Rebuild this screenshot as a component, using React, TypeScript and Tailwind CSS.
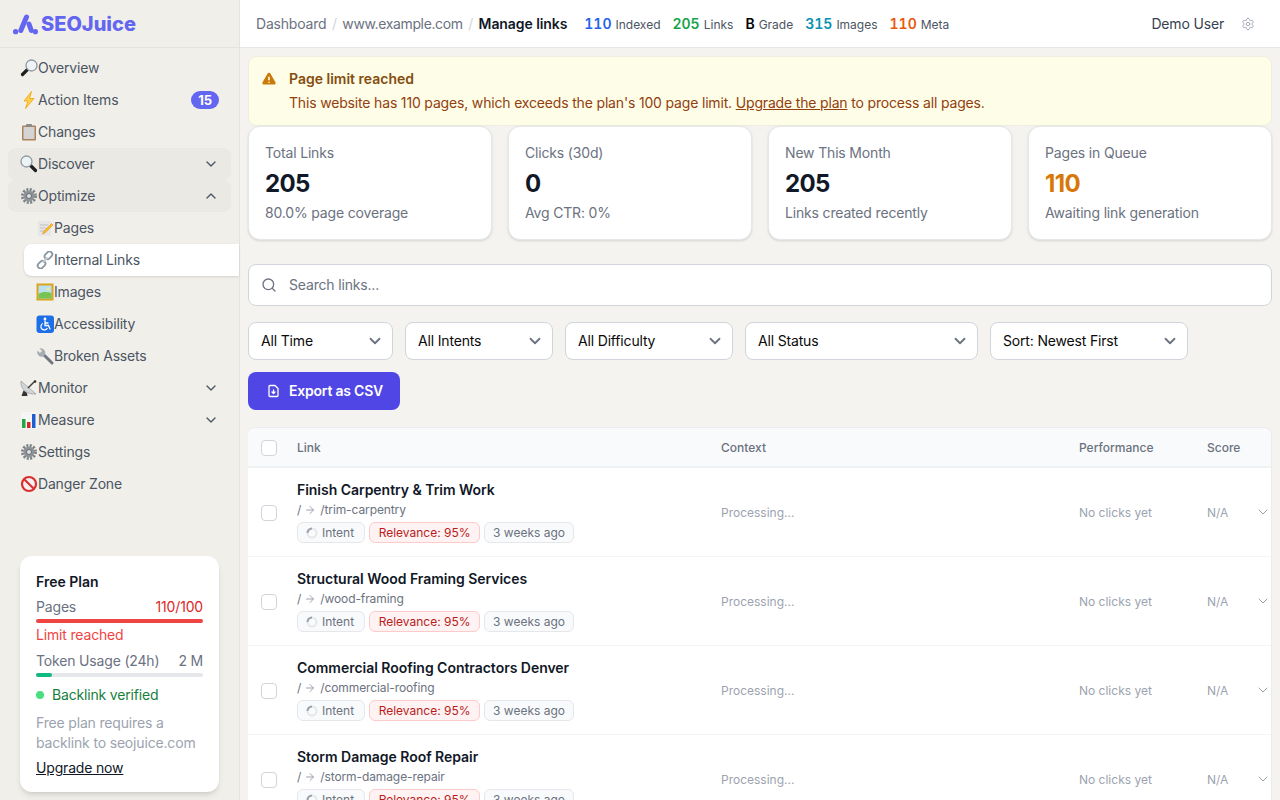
import { ArrowRight, ChevronDown, ChevronUp, Search, Settings } from "lucide-react"
import type { ReactNode } from "react"

const font = { fontFamily: "Inter, 'Noto Sans', sans-serif" }

// the original uses colour emoji, there is no such font here so they are drawn
function Emoji({ name }: { name: string }) {
  const icons: Record<string, ReactNode> = {
    mag_right: (
      <>
        <path d="M7.500 10.500 2.500 15.500" stroke="#1f1f1f" strokeWidth="3.200" strokeLinecap="round" />
        <circle cx="11.500" cy="6.500" r="5.500" fill="#eef3f6" stroke="#8d99a3" strokeWidth="1.300" />
      </>
    ),
    zap: <path d="M11.500 .5 4 10h4l-2.500 7.500L14 7.500H9.500z" fill="#fcd34d" stroke="#f59e0b" strokeWidth=".8" />,
    clipboard: (
      <>
        <rect x="2" y="2.500" width="14" height="15" rx="1" fill="#a9845c" />
        <rect x="3.500" y="4" width="11" height="12" fill="#d4d4d4" />
        <rect x="6" y="1" width="6" height="2.500" rx=".5" fill="#8c8c8c" />
      </>
    ),
    mag_left: (
      <>
        <path d="M10.500 10.500 15.500 15.500" stroke="#1f1f1f" strokeWidth="3.200" strokeLinecap="round" />
        <circle cx="6.500" cy="6.500" r="5.500" fill="#eef3f6" stroke="#8d99a3" strokeWidth="1.300" />
      </>
    ),
    gear: (
      <>
        <circle cx="9" cy="9" r="6.500" fill="none" stroke="#7d8287" strokeWidth="3" strokeDasharray="2 1.400" />
        <circle cx="9" cy="9" r="5.500" fill="#8e9398" />
        <circle cx="9" cy="9" r="2.500" fill="#dfe2e4" stroke="#55595d" strokeWidth=".8" />
      </>
    ),
    memo: (
      <>
        <rect x="2" y="2" width="13" height="15" fill="#e6e6e6" />
        <path d="M4 6h8M4 9h6M4 12h4" stroke="#b5b5b5" strokeWidth=".8" />
        <path d="M15.500 4.500 8 12l-1.500 3 3-1.500L17 6z" fill="#fbbf24" stroke="#d9822b" strokeWidth=".5" />
      </>
    ),
    link: (
      <>
        <rect x="8.200" y="1.600" width="8.500" height="5.600" rx="2.800" transform="rotate(-45 12.400 4.400)" fill="none" stroke="#8a96a0" strokeWidth="1.800" />
        <rect x="1.300" y="10.800" width="8.500" height="5.600" rx="2.800" transform="rotate(-45 5.600 13.600)" fill="none" stroke="#8a96a0" strokeWidth="1.800" />
        <path d="M6.500 11.500 11.500 6.500" stroke="#c2cad0" strokeWidth="1.800" />
      </>
    ),
    picture: (
      <>
        <rect x=".5" y=".5" width="17" height="17" fill="#d9a520" />
        <rect x="2.500" y="2.500" width="13" height="13" fill="#b9e2ee" />
        <path d="M2.500 11c4-2.500 8.500-2.500 13-1v5.500h-13z" fill="#79c450" />
        <circle cx="12" cy="6" r="1.300" fill="#fde68a" />
      </>
    ),
    wheelchair: (
      <>
        <rect x=".5" y=".5" width="17.500" height="17.500" rx="3" fill="#1d6fe8" />
        <circle cx="9" cy="4" r="1.400" fill="#fff" />
        <path d="M9 6v4.500h3.500l1.500 3.500M9 8h3" stroke="#fff" strokeWidth="1.300" fill="none" strokeLinecap="round" />
        <path d="M6.800 8.500a3.400 3.400 0 1 0 4.600 4.400" stroke="#fff" strokeWidth="1.200" fill="none" />
      </>
    ),
    wrench: (
      <>
        <path d="M7 7 16 16" stroke="#6f7780" strokeWidth="3" strokeLinecap="round" />
        <path d="M1.500 3.500 4 6l2-2-2.500-2.500a4.500 4.500 0 0 1 5.500 6L7 9.500a4.500 4.500 0 0 1-5.500-6z" fill="#a7adb3" />
      </>
    ),
    satellite: (
      <>
        <path d="M1 2c-1 7 5 14 15 13z" fill="#d2d5d8" stroke="#8a8f94" strokeWidth=".6" />
        <path d="M8 9 14 3" stroke="#3a3a3a" strokeWidth="1.400" />
        <circle cx="15" cy="2.500" r="1.300" fill="#222" />
        <path d="M3.500 11.500 1.500 17h6L7 14z" fill="#333" />
      </>
    ),
    chart: (
      <>
        <rect x="1" y="1" width="16" height="17" fill="#f5f5f5" />
        <rect x="2" y="8" width="3.500" height="9" fill="#22a745" />
        <rect x="7" y="11" width="3.500" height="6" fill="#dc2626" />
        <rect x="12" y="3" width="3.500" height="14" fill="#1d5fd1" />
      </>
    ),
    no_entry: (
      <>
        <circle cx="9" cy="9" r="7" fill="#f2f2f2" stroke="#dc2f2f" strokeWidth="2.200" />
        <path d="M4.200 4.200 13.800 13.800" stroke="#dc2f2f" strokeWidth="2.200" />
      </>
    ),
  }
  return (
    <svg viewBox="0 0 18 18" className="size-[18px] shrink-0">
      {icons[name]}
    </svg>
  )
}

function NavItem({
  icon,
  label,
  open,
  badge,
  shaded,
}: {
  icon: string
  label: string
  open?: boolean
  badge?: string
  shaded?: boolean
}) {
  return (
    <div
      className={`mx-2 flex h-8 items-center rounded-lg pr-3 pl-3 text-sm text-[#4b5563] ${
        shaded ? "bg-[#ebe9e4]" : ""
      }`}
    >
      <Emoji name={icon} />
      <span className="flex-1">{label}</span>
      {badge && (
        <span className="flex h-[18px] w-7 items-center justify-center rounded-full bg-[#6366f1] text-[13px] font-bold text-white">
          {badge}
        </span>
      )}
      {open === true && <ChevronUp className="size-4 text-[#4b5563]" />}
      {open === false && <ChevronDown className="size-4 text-[#4b5563]" />}
    </div>
  )
}

function SubItem({ icon, label, active }: { icon: string; label: string; active?: boolean }) {
  return (
    <div
      className={`ml-6 flex h-8 items-center pl-3 text-sm text-[#4b5563] ${
        active ? "rounded-l-lg bg-white shadow-sm" : ""
      }`}
    >
      <Emoji name={icon} />
      <span>{label}</span>
    </div>
  )
}

function Sidebar() {
  return (
    <aside className="flex h-full w-[240px] shrink-0 flex-col border-r border-[#e5e3de] bg-[#f1efe9]">
      <div className="flex h-12 shrink-0 items-center gap-[3px] border-b border-[#e5e3de] pl-[13px]">
        <svg viewBox="0 0 25 22" className="h-[22px] w-[25px]" fill="none" stroke="#6366f1" strokeWidth="5" strokeLinecap="round">
          <circle cx="2.600" cy="18.700" r="2.600" fill="#6366f1" stroke="none" />
          <path d="M7.800 17.500 13.500 4" />
          <path d="M16 11 18.300 17.500" />
          <circle cx="22.400" cy="18.700" r="2.600" fill="#6366f1" stroke="none" />
        </svg>
        <span className="text-[20px] font-extrabold tracking-normal text-[#6366f1]">SEOJuice</span>
      </div>
      <nav className="mt-1 flex-1">
        <NavItem icon="mag_right" label="Overview" />
        <NavItem icon="zap" label="Action Items" badge="15" />
        <NavItem icon="clipboard" label="Changes" />
        <NavItem icon="mag_left" label="Discover" open={false} shaded />
        <NavItem icon="gear" label="Optimize" open shaded />
        <SubItem icon="memo" label="Pages" />
        <SubItem icon="link" label="Internal Links" active />
        <SubItem icon="picture" label="Images" />
        <SubItem icon="wheelchair" label="Accessibility" />
        <SubItem icon="wrench" label="Broken Assets" />
        <NavItem icon="satellite" label="Monitor" open={false} />
        <NavItem icon="chart" label="Measure" open={false} />
        <NavItem icon="gear" label="Settings" />
        <NavItem icon="no_entry" label="Danger Zone" />
      </nav>
      <div className="mx-5 mb-2 rounded-xl bg-white px-4 pt-4 pb-[14px] text-sm shadow-md">
        <div className="font-semibold tracking-normal text-[#111827]">Free Plan</div>
        <div className="mt-[5px] flex justify-between text-[#6b7280]">
          <span>Pages</span>
          <span className="text-[#dc2626]">110/100</span>
        </div>
        <div className="mt-0.5 h-1 rounded-full bg-[#ef4444]" />
        <div className="mt-0.5 text-[#ef4444]">Limit reached</div>
        <div className="mt-1.5 flex justify-between text-[#6b7280]">
          <span>Token Usage (24h)</span>
          <span>2 M</span>
        </div>
        <div className="mt-0.5 h-1 rounded-full bg-[#e5e7eb]">
          <div className="h-1 w-4 rounded-full bg-[#10b981]" />
        </div>
        <div className="mt-2 flex items-center gap-2 text-[#15803d]">
          <span className="size-2 rounded-full bg-[#4ade80]" />
          Backlink verified
        </div>
        <div className="mt-2 text-[#9ca3af]">Free plan requires a backlink to seojuice.com</div>
        <div className="mt-[5px] text-[#111827] underline">Upgrade now</div>
      </div>
    </aside>
  )
}

function TopStat({ value, label, color }: { value: string; label: string; color: string }) {
  return (
    <span className="flex items-baseline gap-1">
      <span className={`text-sm font-semibold tracking-normal tabular-nums ${color}`}>{value}</span>
      <span className="text-xs tracking-normal text-[#4b5563]">{label}</span>
    </span>
  )
}

function TopBar() {
  return (
    <header className="flex h-12 shrink-0 items-center border-b border-[#e5e7eb] bg-white pr-[25px] pl-4">
      <div className="flex items-center text-sm text-[#6b7280]">
        <span className="tracking-[-0.2px]">Dashboard</span>
        <span className="mx-[5.5px] text-[#d1d5db]">/</span>
        <span className="tracking-[-0.36px]">www.example.com</span>
        <span className="mx-[5.5px] text-[#d1d5db]">/</span>
        <span className="font-semibold tracking-[-0.08px] text-[#111827]">Manage links</span>
      </div>
      <div className="ml-[17px] flex items-baseline gap-3">
        <TopStat value="110" label="Indexed" color="text-[#2563eb]" />
        <TopStat value="205" label="Links" color="text-[#16a34a]" />
        <TopStat value="B" label="Grade" color="text-black" />
        <TopStat value="315" label="Images" color="text-[#0891b2]" />
        <TopStat value="110" label="Meta" color="text-[#ea580c]" />
      </div>
      <span className="ml-auto text-sm text-[#374151]">Demo User</span>
      <Settings className="ml-[17px] size-[14px] text-[#9ca3af]" strokeWidth={1.5} />
    </header>
  )
}

function StatCard({
  label,
  value,
  sub,
  valueColor = "text-[#111827]",
}: {
  label: string
  value: string
  sub: string
  valueColor?: string
}) {
  return (
    <div className="rounded-xl border border-[#e5e7eb] bg-white p-4 text-sm shadow-sm">
      <div className="text-[#6b7280]">{label}</div>
      <div className={`mt-[5px] text-2xl font-bold tracking-[-0.6px] ${valueColor}`}>{value}</div>
      <div className="mt-[3px] text-[#6b7280]">{sub}</div>
    </div>
  )
}

function Select({ label, width }: { label: string; width: string }) {
  return (
    <div
      className={`flex h-[38px] items-center justify-between rounded-lg border border-[#d1d5db] bg-white pr-2 pl-3 text-sm text-[#0a0a0a] ${width}`}
    >
      {label}
      <ChevronDown className="size-[18px] text-[#6b7280]" strokeWidth={2.4} />
    </div>
  )
}

function Checkbox() {
  return <span className="block size-4 rounded border border-[#d1d5db] bg-white" />
}

const rowGrid = "grid grid-cols-[49px_424px_358px_128px_48px_17px]"

function LinkRow({ title, path }: { title: string; path: string }) {
  return (
    <div className={`${rowGrid} items-center border-b border-[#f3f4f6] bg-white pt-3 pb-[13px] text-xs tracking-normal`}>
      <span className="pt-[2px] pl-[13px]">
        <Checkbox />
      </span>
      <div>
        <div className="text-sm leading-5 font-semibold tracking-[-0.03px] text-[#111827]">{title}</div>
        <div className="mt-0.5 flex h-4 items-center tracking-[-0.1px] text-[#6b7280]">
          / <ArrowRight className="mr-1 ml-[3px] size-3 text-[#9ca3af]" /> {path}
        </div>
        <div className="mt-1 flex gap-1">
          <span className="flex h-[21px] items-center gap-1 rounded-md border border-[#e5e7eb] bg-[#f9fafb] pr-[10px] pl-2 text-[#6b7280]">
            <svg viewBox="0 0 12 12" className="size-3">
              <circle cx="6" cy="6" r="4.500" fill="none" stroke="#e5e7eb" strokeWidth="2" />
              <path d="M1.500 6A4.500 4.500 0 0 1 6 1.500" fill="none" stroke="#9ca3af" strokeWidth="2" />
            </svg>
            Intent
          </span>
          <span className="flex h-[21px] items-center rounded-md border border-[#fecaca] bg-[#fef2f2] px-[8.5px] text-[#b91c1c]">
            Relevance: 95%
          </span>
          <span className="flex h-[21px] items-center rounded-md border border-[#e5e7eb] bg-[#f9fafb] px-2 text-[#6b7280]">
            3 weeks ago
          </span>
        </div>
      </div>
      <span className="pt-[2px] text-[#9ca3af]">Processing...</span>
      <span className="pt-[2px] text-[#9ca3af]">No clicks yet</span>
      <span className="pt-[2px] text-[#9ca3af]">N/A</span>
      <ChevronDown className="size-4 text-[#9ca3af]" strokeWidth={1.5} />
    </div>
  )
}

export default function App() {
  return (
    <div className="flex h-screen w-full overflow-hidden bg-[#f4f3ef] tracking-[-0.17px]" style={font}>
      <Sidebar />
      <div className="flex h-full min-w-0 flex-1 flex-col">
        <TopBar />
        <main className="flex-1 overflow-hidden px-2 pt-2">
          <div className="flex gap-3 rounded-lg border border-[#eeeee0] bg-[#fefde8] p-3 text-sm">
            <svg viewBox="0 0 20 20" className="mt-0.5 size-4 shrink-0 fill-[#ca7a08]">
              <path
                fillRule="evenodd"
                d="M8.260 3.100c.770-1.330 2.700-1.330 3.470 0l6.290 10.900c.770 1.330-.190 3-1.730 3H3.700c-1.540 0-2.500-1.670-1.730-3L8.260 3.100zM10 7a1 1 0 0 0-1 1v3a1 1 0 1 0 2 0V8a1 1 0 0 0-1-1zm0 8a1 1 0 1 0 0-2 1 1 0 0 0 0 2z"
              />
            </svg>
            <div>
              <div className="font-semibold tracking-normal text-[#854d0e]">Page limit reached</div>
              <div className="mt-1 text-[#92400e]">
                This website has 110 pages, which exceeds the plan's 100 page limit.{" "}
                <span className="underline">Upgrade the plan</span> to process all pages.
              </div>
            </div>
          </div>

          <div className="grid grid-cols-4 gap-4">
            <StatCard label="Total Links" value="205" sub="80.0% page coverage" />
            <StatCard label="Clicks (30d)" value="0" sub="Avg CTR: 0%" />
            <StatCard label="New This Month" value="205" sub="Links created recently" />
            <StatCard label="Pages in Queue" value="110" sub="Awaiting link generation" valueColor="text-[#d97706]" />
          </div>

          <div className="mt-6 flex h-[42px] items-center gap-3 rounded-lg border border-[#d1d5db] bg-white pl-3 text-sm text-[#6b7280]">
            <Search className="size-4 text-[#6b7280]" />
            Search links...
          </div>

          <div className="mt-4 flex gap-3">
            <Select label="All Time" width="w-[145px]" />
            <Select label="All Intents" width="w-[148px]" />
            <Select label="All Difficulty" width="w-[168px]" />
            <Select label="All Status" width="w-[233px]" />
            <Select label="Sort: Newest First" width="w-[198px]" />
          </div>

          <div className="mt-3 flex h-[38px] w-[152px] items-center gap-2 rounded-lg bg-[#4f46e5] pl-[19px] text-sm font-semibold tracking-[-0.22px] text-white">
            <svg viewBox="0 0 14 14" className="size-[14px]" fill="none" stroke="#fff" strokeWidth="1.300" strokeLinejoin="round">
              <path d="M3 1.500h5l3 3v7a1 1 0 0 1-1 1H3a1 1 0 0 1-1-1v-9a1 1 0 0 1 1-1z" />
              <path d="M6.500 6v3M5 8l1.500 1.500L8 8" strokeLinecap="round" />
            </svg>
            Export as CSV
          </div>

          <div className="mt-[17px] overflow-hidden rounded-t-lg border-t border-r border-[#ebecef]">
            <div className={`${rowGrid} h-10 items-center border-b-2 border-[#f0f1f3] bg-[#f9fafb] pt-0.5 text-xs font-medium tracking-normal text-[#6b7280]`}>
              <span className="pl-[13px]">
                <Checkbox />
              </span>
              <span>Link</span>
              <span>Context</span>
              <span>Performance</span>
              <span>Score</span>
              <span />
            </div>
            <LinkRow title="Finish Carpentry & Trim Work" path="/trim-carpentry" />
            <LinkRow title="Structural Wood Framing Services" path="/wood-framing" />
            <LinkRow title="Commercial Roofing Contractors Denver" path="/commercial-roofing" />
            <LinkRow title="Storm Damage Roof Repair" path="/storm-damage-repair" />
          </div>
        </main>
      </div>
    </div>
  )
}
